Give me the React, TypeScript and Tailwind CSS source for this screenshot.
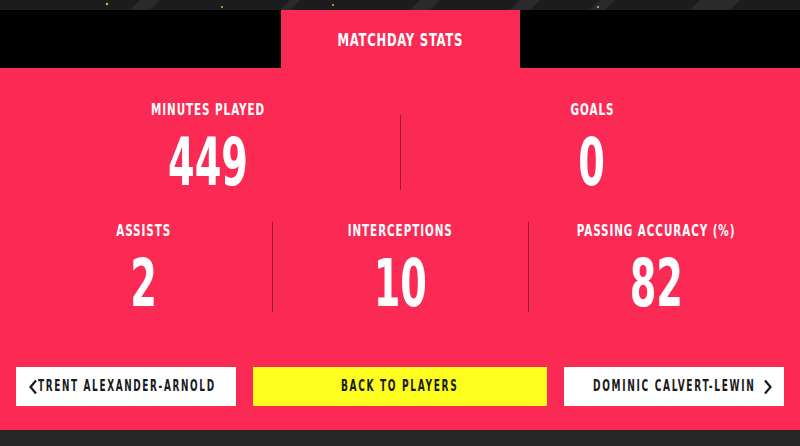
import React from "react";

const font = { fontFamily: '"Liberation Sans Narrow", "DejaVu Sans Condensed", "Liberation Sans", sans-serif' };

function Stat({ label, value }: { label: string; value: string }) {
  return (
    <div className="flex flex-col items-center">
      <div className="text-[15px] font-bold tracking-[1.2px] text-white leading-none whitespace-nowrap scale-x-[0.77]">{label}</div>
      <div className="mt-[12px] text-[66px] font-bold leading-none text-white whitespace-nowrap scale-x-[0.645]">{value}</div>
    </div>
  );
}

export default function App() {
  return (
    <div className="w-[800px] h-[446px] flex flex-col bg-[#262626] overflow-hidden" style={font}>
      <div className="h-[10px] bg-[#1c1c1f] relative overflow-hidden">
        <svg className="absolute inset-0" width="800" height="10">
          <g fill="#2a2a2d">
            <polygon points="140,0 160,0 150,10 130,10" />
            <polygon points="290,0 300,0 290,10 280,10" />
            <polygon points="420,0 440,0 430,10 410,10" />
            <polygon points="520,0 540,0 530,10 510,10" />
            <polygon points="600,0 615,0 605,10 590,10" />
            <polygon points="700,0 740,0 730,10 690,10" />
          </g>
          <circle cx="107" cy="4" r="1.2" fill="#c8c820" />
          <circle cx="222" cy="7" r="1" fill="#c8c820" />
          <circle cx="333" cy="5" r="1" fill="#c8c820" />
          <circle cx="598" cy="7" r="1" fill="#c8c820" />
        </svg>
      </div>
      <div className="h-[58px] bg-black flex justify-center">
        <div className="w-[239px] bg-[#fb2a55] flex items-center justify-center">
          <span className="text-[18px] font-bold tracking-[1px] text-white whitespace-nowrap scale-x-[0.72]">MATCHDAY STATS</span>
        </div>
      </div>
      <div className="h-[362px] bg-[#fb2a55] px-4 flex flex-col">
        <div className="grid grid-cols-2 mt-[35px] h-[75px]">
          <div className="flex justify-center">
            <Stat label="MINUTES PLAYED" value="449" />
          </div>
          <div className="flex justify-center relative">
            <div className="absolute left-0 top-[12px] h-[75px] w-px bg-[#9a1a36]" />
            <Stat label="GOALS" value="0" />
          </div>
        </div>
        <div className="grid grid-cols-3 mt-[46px] h-[90px]">
          <div className="flex justify-center">
            <Stat label="ASSISTS" value="2" />
          </div>
          <div className="flex justify-center relative">
            <div className="absolute left-0 top-[-2px] h-[90px] w-px bg-[#9a1a36]" />
            <Stat label="INTERCEPTIONS" value="10" />
          </div>
          <div className="flex justify-center relative">
            <div className="absolute left-0 top-[-2px] h-[90px] w-px bg-[#9a1a36]" />
            <Stat label="PASSING ACCURACY (%)" value="82" />
          </div>
        </div>
        <div className="flex gap-[17px] mt-[53px] h-[39px]">
          <div className="w-[220px] bg-white flex items-center pl-[12px] overflow-hidden">
            <svg width="10" height="16" viewBox="0 0 10 16" className="shrink-0">
              <path d="M8 1.5 L2.5 8 L8 14.5" fill="none" stroke="#1a1a1a" strokeWidth="2.2" />
            </svg>
            <span className="shrink-0 text-[15px] font-bold tracking-[2.5px] text-[#1a1a1a] whitespace-nowrap origin-left scale-x-[0.66]">TRENT ALEXANDER-ARNOLD</span>
          </div>
          <div className="flex-1 bg-[#fdfd1f] flex items-center justify-center">
            <span className="text-[15px] font-bold tracking-[2.5px] text-[#1a1a1a] whitespace-nowrap scale-x-[0.67]">BACK TO PLAYERS</span>
          </div>
          <div className="w-[220px] bg-white flex items-center justify-end pr-[11px] overflow-hidden">
            <span className="shrink-0 text-[15px] font-bold tracking-[2.5px] text-[#1a1a1a] whitespace-nowrap origin-right scale-x-[0.67] mr-[8px]">DOMINIC CALVERT-LEWIN</span>
            <svg width="10" height="16" viewBox="0 0 10 16" className="shrink-0">
              <path d="M2 1.5 L7.5 8 L2 14.5" fill="none" stroke="#1a1a1a" strokeWidth="2.2" />
            </svg>
          </div>
        </div>
      </div>
      <div className="flex-1 bg-[#262626]" />
    </div>
  );
}
